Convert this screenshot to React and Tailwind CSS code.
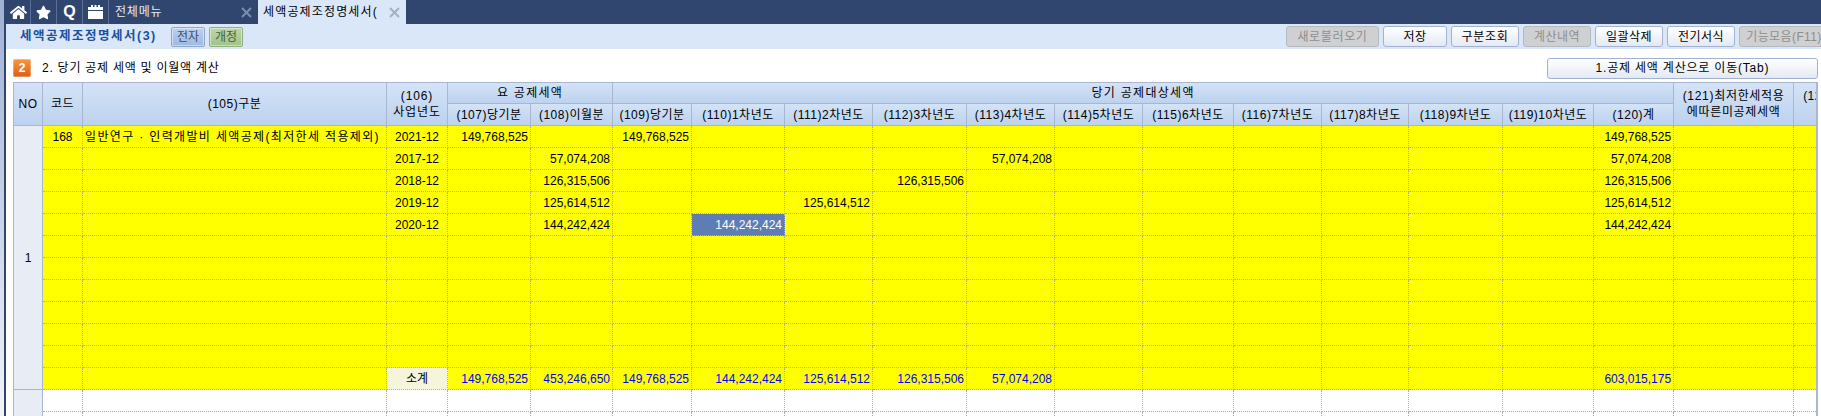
import React from "react";
import { FaHome, FaStar } from "react-icons/fa";

const font = "[font-family:'Liberation_Sans','Noto_Sans_CJK_KR',sans-serif]";

const columns = [
  { key: "no", className: "w-[30px]" },
  { key: "code", className: "w-[40px]" },
  { key: "name", className: "w-[304px]" },
  { key: "year", className: "w-[61px]" },
  { key: "c107", className: "w-[83px]" },
  { key: "c108", className: "w-[82px]" },
  { key: "c109", className: "w-[79px]" },
  { key: "c110", className: "w-[93px]" },
  { key: "c111", className: "w-[88px]" },
  { key: "c112", className: "w-[94px]" },
  { key: "c113", className: "w-[88px]" },
  { key: "c114", className: "w-[88px]" },
  { key: "c115", className: "w-[91px]" },
  { key: "c116", className: "w-[88px]" },
  { key: "c117", className: "w-[87px]" },
  { key: "c118", className: "w-[94px]" },
  { key: "c119", className: "w-[91px]" },
  { key: "c120", className: "w-[80px]" },
  { key: "c121", className: "w-[120px]" },
  { key: "c122", className: "w-[100px]" },
];

const subHeaders = [
  "(109)당기분",
  "(110)1차년도",
  "(111)2차년도",
  "(112)3차년도",
  "(113)4차년도",
  "(114)5차년도",
  "(115)6차년도",
  "(116)7차년도",
  "(117)8차년도",
  "(118)9차년도",
  "(119)10차년도",
  "(120)계",
];

const moneyKeys = columns.slice(4).map((c) => c.key);

const rows = [
  {
    code: "168",
    name: "일반연구 · 인력개발비 세액공제(최저한세 적용제외)",
    year: "2021-12",
    c107: "149,768,525",
    c109: "149,768,525",
    c120: "149,768,525",
  },
  { year: "2017-12", c108: "57,074,208", c113: "57,074,208", c120: "57,074,208" },
  { year: "2018-12", c108: "126,315,506", c112: "126,315,506", c120: "126,315,506" },
  { year: "2019-12", c108: "125,614,512", c111: "125,614,512", c120: "125,614,512" },
  { year: "2020-12", c108: "144,242,424", c110: "144,242,424", c120: "144,242,424", selected: "c110" },
  {},
  {},
  {},
  {},
  {},
  {},
  {
    total: true,
    year: "소계",
    c107: "149,768,525",
    c108: "453,246,650",
    c109: "149,768,525",
    c110: "144,242,424",
    c111: "125,614,512",
    c112: "126,315,506",
    c113: "57,074,208",
    c120: "603,015,175",
  },
];

function TabClose({ className }) {
  return (
    <svg width="11" height="11" viewBox="0 0 11 11" className={className}>
      <path d="M1 1L10 10M10 1L1 10" stroke="currentColor" strokeWidth="2" />
    </svg>
  );
}

function IconTab({ width, children }) {
  return (
    <div className={`flex h-full items-center justify-center border-r border-[#5c6f97] text-white ${width}`}>
      {children}
    </div>
  );
}

function TabBar() {
  return (
    <div className="flex h-[24px] shrink-0 bg-[#31466f]">
      <IconTab width="w-[25px]">
        <FaHome size={17} />
      </IconTab>
      <IconTab width="w-[26px]">
        <FaStar size={15} />
      </IconTab>
      <IconTab width="w-[26px]">
        <span className="text-[16px] font-bold leading-none">Q</span>
      </IconTab>
      <IconTab width="w-[26px]">
        <svg width="15" height="14" viewBox="0 0 15 14">
          <path d="M0 2h3V0h2v2h1.5V0h2v2H10V0h2v2h3v3H0zM0 6h15v8H0z" fill="currentColor" />
        </svg>
      </IconTab>
      <div className="flex w-[149px] items-center pl-[6px] pr-[6px] text-[12px] tracking-[0.8px] text-[#e6ebf5]">
        <span className="flex-1">전체메뉴</span>
        <TabClose className="text-[#7d8dac]" />
      </div>
      <div className="flex w-[148px] items-center bg-[#dae7f8] px-[5px] text-[12px] text-black">
        <span className="w-[120px] whitespace-nowrap tracking-[1.15px]">세액공제조정명세서(</span>
        <TabClose className="ml-[6px] text-[#a4afc2]" />
      </div>
    </div>
  );
}

function ActionButton({ children, disabled, className = "" }) {
  const look = disabled
    ? "border-[#b5b9c2] bg-[#cfd0d2] text-[#8e8e8e]"
    : "border-[#a3b3cf] bg-gradient-to-b from-[#ffffff] to-[#e3e9f3] text-black";
  return (
    <div
      className={`flex h-[21px] shrink-0 items-center justify-center whitespace-nowrap rounded-[3px] border text-[12px] ${look} ${className}`}
    >
      {children}
    </div>
  );
}

function Toolbar() {
  return (
    <div className="flex h-[25px] shrink-0 items-center bg-[#dae7f8]">
      <span className="ml-[14px] w-[137px] whitespace-nowrap text-[12.5px] font-bold tracking-[1.5px] text-[#1d4f9f]">
        세액공제조정명세서(3)
      </span>
      <div className="ml-[14px] flex h-[20px] w-[34px] items-center justify-center rounded-[2px] border border-[#8fa6cc] bg-gradient-to-b from-[#bcd0ee] to-[#9fb9e0] text-[12px] text-[#3d4d68] shadow-[inset_0_0_0_1px_rgba(255,255,255,0.45)]">
        전자
      </div>
      <div className="ml-[4px] flex h-[20px] w-[34px] items-center justify-center rounded-[2px] border border-[#8fae82] bg-gradient-to-b from-[#bcd6a8] to-[#a0c48a] text-[12px] text-[#46603c] shadow-[inset_0_0_0_1px_rgba(255,255,255,0.45)]">
        개정
      </div>
      <div className="ml-auto flex h-full w-[535px] shrink-0 items-center gap-[4px] overflow-hidden">
        <ActionButton disabled className="w-[93px] tracking-[0.65px]">
          새로불러오기
        </ActionButton>
        <ActionButton className="w-[64px] tracking-[0.5px]">저장</ActionButton>
        <ActionButton className="w-[68px] tracking-[0.7px]">구분조회</ActionButton>
        <ActionButton disabled className="w-[68px] tracking-[0.4px]">
          계산내역
        </ActionButton>
        <ActionButton className="w-[68px] tracking-[0.5px]">일괄삭제</ActionButton>
        <ActionButton className="w-[68px] tracking-[0.5px]">전기서식</ActionButton>
        <ActionButton disabled className="w-[90px] tracking-[0.4px]">
          기능모음(F11)
        </ActionButton>
      </div>
    </div>
  );
}

function SectionTitle() {
  return (
    <div className="flex h-[33px] shrink-0 items-center pl-[7px] pr-[3px] pt-[5px]">
      <div className="flex h-[18px] w-[18px] items-center justify-center rounded-[2px] bg-gradient-to-b from-[#f79a3e] to-[#dd5a12] text-[12px] font-bold text-white shadow-[inset_0_0_0_1px_rgba(255,255,255,0.3)]">
        2
      </div>
      <span className="ml-[11px] text-[12px] tracking-[0.75px] text-black">2. 당기 공제 세액 및 이월액 계산</span>
      <ActionButton className="ml-auto w-[271px] tracking-[0.8px]">1.공제 세액 계산으로 이동(Tab)</ActionButton>
    </div>
  );
}

const headCell =
  "border-r border-b border-[#aab6d0] bg-gradient-to-b from-[#d4e3f6] to-[#bcd2ef] p-0 text-center align-middle text-[12px] font-normal leading-[16px] tracking-[0.5px] text-black whitespace-nowrap";

const dataCell =
  "h-[22px] border-r border-b border-dotted border-[#a3aec6] p-0 text-[12px] leading-none whitespace-nowrap";

const noCell = "border-x border-[#aab6d0] bg-[#e8ecf5] p-0 text-center text-[12px]";

function DataRow({ row, index }) {
  return (
    <tr className="bg-[#ffff00]">
      {index === 0 && (
        <td rowSpan={12} className={`${noCell} border-b`}>
          1
        </td>
      )}
      <td className={`${dataCell} text-center`}>{row.code}</td>
      <td className={`${dataCell} pl-[2px] tracking-[1.35px]`}>{row.name}</td>
      <td className={`${dataCell} text-center ${row.total ? "bg-[#f5f5dc]" : ""}`}>{row.year}</td>
      {moneyKeys.map((k) => (
        <td
          key={k}
          className={`${dataCell} pr-[2px] text-right ${row.total ? "text-[#0000ff]" : "text-black"} ${
            row.selected === k ? "bg-[#5f7db5] !text-white" : ""
          }`}
        >
          {row[k]}
        </td>
      ))}
    </tr>
  );
}

function BlankRow({ first }) {
  return (
    <tr className="bg-white">
      {first && <td rowSpan={2} className={noCell} />}
      {columns.slice(1).map((c) => (
        <td key={c.key} className={dataCell} />
      ))}
    </tr>
  );
}

function Grid() {
  return (
    <div className="ml-[7px] w-[1805px] flex-1 overflow-hidden border-r-2 border-t border-[#aab6d0]">
      <table className="w-[1881px] table-fixed border-separate border-spacing-0">
        <colgroup>
          {columns.map((c) => (
            <col key={c.key} className={c.className} />
          ))}
        </colgroup>
        <thead>
          <tr className="h-[21px]">
            <th rowSpan={2} className={`${headCell} border-l`}>
              NO
            </th>
            <th rowSpan={2} className={headCell}>
              코드
            </th>
            <th rowSpan={2} className={headCell}>
              (105)구분
            </th>
            <th rowSpan={2} className={`${headCell} !tracking-[0.85px]`}>
              (106)
              <br />
              사업년도
            </th>
            <th colSpan={2} className={`${headCell} !tracking-[1.25px]`}>
              요 공제세액
            </th>
            <th colSpan={12} className={`${headCell} !tracking-[1.3px]`}>
              당기 공제대상세액
            </th>
            <th rowSpan={2} className={`${headCell} !tracking-[0.7px]`}>
              (121)최저한세적용
              <br />
              에따른미공제세액
            </th>
            <th rowSpan={2} className={`${headCell} !text-left pl-[9px]`}>
              (122)
              <br />
              &nbsp;
            </th>
          </tr>
          <tr className="h-[22px]">
            <th className={headCell}>(107)당기분</th>
            <th className={headCell}>(108)이월분</th>
            {subHeaders.map((label) => (
              <th key={label} className={headCell}>
                {label}
              </th>
            ))}
          </tr>
        </thead>
        <tbody>
          {rows.map((row, i) => (
            <DataRow key={i} row={row} index={i} />
          ))}
          <BlankRow first />
          <BlankRow />
        </tbody>
      </table>
    </div>
  );
}

export default function App() {
  return (
    <div className={`flex h-[416px] w-[1821px] overflow-hidden bg-white ${font}`}>
      <div className="w-[4px] shrink-0 bg-gradient-to-b from-[#9fb1d4] to-[#f2f4fa]" />
      <div className="w-[2px] shrink-0 bg-[#31466f]" />
      <div className="flex min-w-0 flex-1 flex-col">
        <TabBar />
        <Toolbar />
        <SectionTitle />
        <Grid />
      </div>
    </div>
  );
}
